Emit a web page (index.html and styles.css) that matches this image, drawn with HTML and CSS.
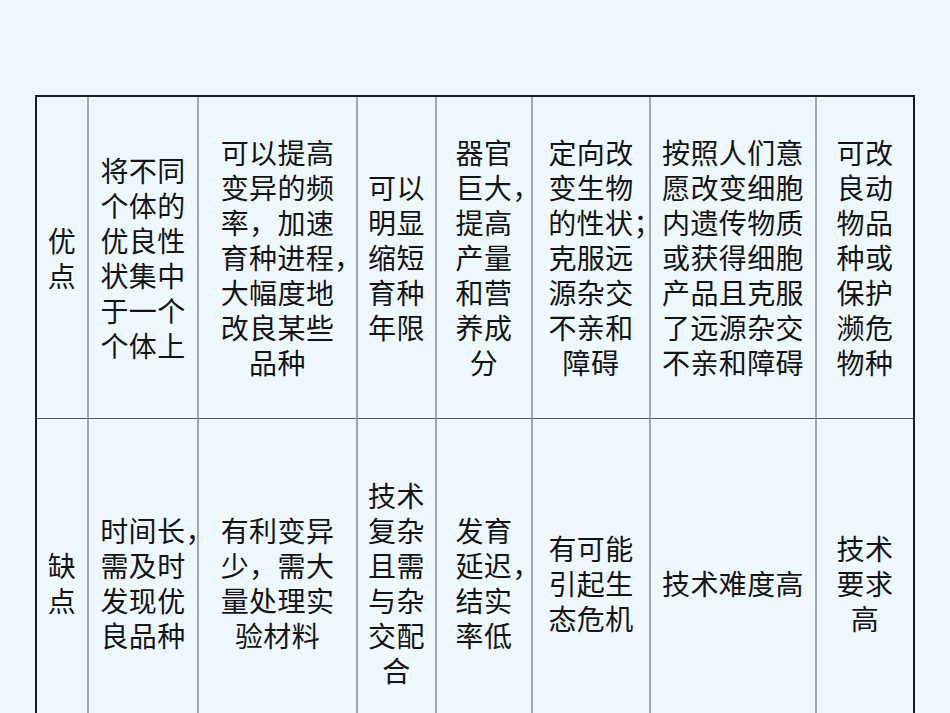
FILE: index.html
```html
<!DOCTYPE html>
<html lang="zh-CN">
<head>
<meta charset="utf-8">
<title>育种方法比较</title>
<link rel="stylesheet" href="styles.css">
</head>
<body>
<div class="grid">
  <div class="cell first"><div class="txt">优<br>点</div></div>
  <div class="cell"><div class="txt">将不同<br>个体的<br>优良性<br>状集中<br>于一个<br>个体上</div></div>
  <div class="cell"><div class="txt">可以提高<br>变异的频<br>率，加速<br>育种进程<span class="hang">，</span><br>大幅度地<br>改良某些<br>品种</div></div>
  <div class="cell"><div class="txt">可以<br>明显<br>缩短<br>育种<br>年限</div></div>
  <div class="cell"><div class="txt">器官<br>巨大<span class="hang">，</span><br>提高<br>产量<br>和营<br>养成<br>分</div></div>
  <div class="cell"><div class="txt">定向改<br>变生物<br>的性状<span class="hang">；</span><br>克服远<br>源杂交<br>不亲和<br>障碍</div></div>
  <div class="cell"><div class="txt">按照人们意<br>愿改变细胞<br>内遗传物质<br>或获得细胞<br>产品且克服<br>了远源杂交<br>不亲和障碍</div></div>
  <div class="cell"><div class="txt">可改<br>良动<br>物品<br>种或<br>保护<br>濒危<br>物种</div></div>

  <div class="cell first row2"><div class="txt">缺<br>点</div></div>
  <div class="cell row2"><div class="txt">时间长<span class="hang">，</span><br>需及时<br>发现优<br>良品种</div></div>
  <div class="cell row2"><div class="txt">有利变异<br>少，需大<br>量处理实<br>验材料</div></div>
  <div class="cell row2"><div class="txt">技术<br>复杂<br>且需<br>与杂<br>交配<br>合</div></div>
  <div class="cell row2"><div class="txt">发育<br>延迟<span class="hang">，</span><br>结实<br>率低</div></div>
  <div class="cell row2"><div class="txt">有可能<br>引起生<br>态危机</div></div>
  <div class="cell row2"><div class="txt">技术难度高</div></div>
  <div class="cell row2"><div class="txt">技术<br>要求<br>高</div></div>
</div>
</body>
</html>
```
FILE: styles.css
```css
html, body {
  margin: 0;
  padding: 0;
  background: #f0f8ff;
}
body {
  font-family: "Noto Sans CJK SC", "Noto Sans", sans-serif;
  color: #141414;
  overflow: hidden;
  height: 713px;
}
.grid {
  margin: 95px 0 0 35px;
  width: 880px;
  box-sizing: border-box;
  border: 2px solid #1c1c1c;
  border-bottom: none;
  display: grid;
  grid-template-columns: 50px 110px 159px 79px 96px 118px 166px 98px;
  grid-template-rows: 321px 329px;
}
.cell {
  box-sizing: border-box;
  border-left: 2px solid #a3a8b0;
  display: flex;
  align-items: center;
  justify-content: center;
}
.cell.first {
  border-left: none;
}
.cell.row2 {
  border-top: 1px solid #555a60;
}
.txt {
  text-align: center;
  font-size: 28px;
  line-height: 35px;
  letter-spacing: 0.4px;
  white-space: nowrap;
}
.hang {
  margin-right: -28px;
}
```
